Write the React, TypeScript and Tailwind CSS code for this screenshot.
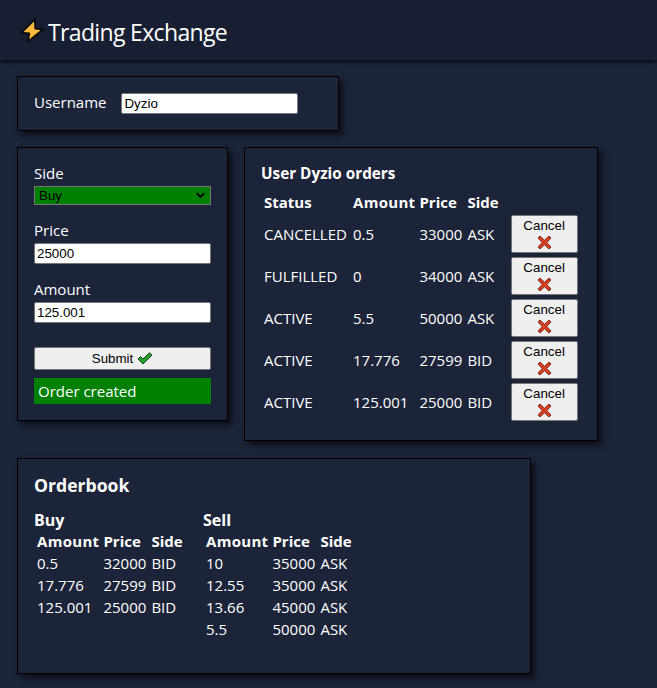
import React from "react";

function Bolt() {
  return (
    <svg width="24" height="25" viewBox="0 0 24 25" className="shrink-0">
      <path d="M14.8 1.2 L1.2 14.8 L9.2 15.6 L7.8 23.8 L23 11.4 L15.4 10.6 Z" fill="#fdbb3c" stroke="#0d0d0d" strokeWidth="2" strokeLinejoin="round" />
    </svg>
  );
}

function Check() {
  return (
    <svg width="16" height="13" viewBox="0 0 16 13" className="inline-block">
      <path d="M1 7 L3.5 4.5 L6 7 L12.5 0.8 L15 3.2 L6 12 Z" fill="#22a32a" stroke="#1f3a1f" strokeWidth="1" strokeLinejoin="round" />
    </svg>
  );
}

function Cross() {
  return (
    <svg width="15" height="15" viewBox="0 0 15 15" className="block mx-auto mt-0.5">
      <path d="M3 1 L7.5 5.2 L12 1 L14 3 L9.8 7.5 L14 12 L12 14 L7.5 9.8 L3 14 L1 12 L5.2 7.5 L1 3 Z" fill="#d8401f" stroke="#7a2a20" strokeWidth="1" strokeLinejoin="round" />
    </svg>
  );
}

const cardClass = "bg-[#1c2439] border border-black shadow-[4px_4px_6px_rgba(0,0,0,0.6)] text-white";
const inputClass = "block w-full h-[21px] bg-white border border-[#767676] text-black text-[13.33px] px-0.5 font-['Liberation_Sans',sans-serif] rounded-[2px] outline-none";

const userOrders = [
  ["CANCELLED", "0.5", "33000", "ASK"],
  ["FULFILLED", "0", "34000", "ASK"],
  ["ACTIVE", "5.5", "50000", "ASK"],
  ["ACTIVE", "17.776", "27599", "BID"],
  ["ACTIVE", "125.001", "25000", "BID"],
];

const buys = [
  ["0.5", "32000", "BID"],
  ["17.776", "27599", "BID"],
  ["125.001", "25000", "BID"],
];

const sells = [
  ["10", "35000", "ASK"],
  ["12.55", "35000", "ASK"],
  ["13.66", "45000", "ASK"],
  ["5.5", "50000", "ASK"],
];

function BookTable({ title, rows }: { title: string; rows: string[][] }) {
  return (
    <div className="w-[169px]">
      <div className="font-bold text-[16px] leading-[18px]">{title}</div>
      <table className="border-separate border-spacing-[2px] text-[15px] leading-[18px] text-left">
        <thead>
          <tr>
            <th className="p-px w-[64px] tracking-[0.3px]">Amount</th>
            <th className="p-px w-[46px]">Price</th>
            <th className="p-px">Side</th>
          </tr>
        </thead>
        <tbody>
          {rows.map((r, i) => (
            <tr key={i}>
              {r.map((c, j) => (
                <td key={j} className="p-px">{c}</td>
              ))}
            </tr>
          ))}
        </tbody>
      </table>
    </div>
  );
}

export default function App() {
  return (
    <div className="w-[657px] h-[688px] overflow-hidden bg-[#1c2439] font-['Open_Sans',sans-serif] text-white">
      {/* Header */}
      <header className="h-[60px] bg-[#191f33] shadow-[0_2px_4px_rgba(0,0,0,0.8)] flex items-center pl-5 gap-1">
        <Bolt />
        <span className="text-[23px] leading-none tracking-[-0.65px] pt-1">Trading Exchange</span>
      </header>

      <main className="pl-[17px] pt-4 flex flex-col">
        {/* Username */}
        <section className={`${cardClass} w-[322px] h-[55px] flex items-center pl-4 gap-[15px]`}>
          <label className="text-[15px] pb-0.5">Username</label>
          <input className={`${inputClass} !w-[177px]`} defaultValue="Dyzio" readOnly />
        </section>

        <div className="flex items-start gap-4 mt-4">
          {/* Order form */}
          <section className={`${cardClass} w-[211px] h-[274px] px-4 pt-[15px]`}>
            <div className="text-[15px] leading-5">Side</div>
            <div className="h-[19px] mt-[3px] bg-[#008000] border border-[#767676] text-black text-[13.33px] font-['Liberation_Sans',sans-serif] flex items-center justify-between pl-1 pr-[5px]">
              <span>Buy</span>
              <svg width="9" height="7" viewBox="0 0 9 7"><path d="M0.8 1.2 L4.5 4.9 L8.2 1.2" fill="none" stroke="#000" strokeWidth="2" /></svg>
            </div>
            <div className="text-[15px] leading-5 mt-[15px] mb-[3px]">Price</div>
            <input className={inputClass} defaultValue="25000" readOnly />
            <div className="text-[15px] leading-5 mt-[15px] mb-[3px]">Amount</div>
            <input className={inputClass} defaultValue="125.001" readOnly />
            <button className="w-full h-[23px] mt-6 bg-[#efefef] border border-[#767676] rounded-[2px] text-black text-[13.33px] font-['Liberation_Sans',sans-serif] flex items-center justify-center gap-1">
              Submit <Check />
            </button>
            <div className="h-[26px] mt-2 bg-[#008000] text-[15px] leading-[26px] pl-1">Order created</div>
          </section>

          {/* User orders */}
          <section className={`${cardClass} w-[354px] h-[294px] pl-4 pt-[15px]`}>
            <div className="font-bold text-[15.3px] leading-5">User Dyzio orders</div>
            <table className="border-separate border-spacing-[2px] text-[15px] leading-4 text-left mt-2">
              <thead>
                <tr>
                  <th className="pt-px pb-0.5 px-px w-[87px]">Status</th>
                  <th className="pt-px pb-0.5 px-px w-[64px] tracking-[0.3px]">Amount</th>
                  <th className="pt-px pb-0.5 px-px w-[46px]">Price</th>
                  <th className="pt-px pb-0.5 px-px">Side</th>
                  <th className="pt-px pb-0.5 px-px" />
                </tr>
              </thead>
              <tbody>
                {userOrders.map((o, i) => (
                  <tr key={i}>
                    {o.map((c, j) => (
                      <td key={j} className="px-px pb-px">{c}</td>
                    ))}
                    <td className="pl-[9px] pr-px py-px">
                      <button className="w-[67px] h-[38px] bg-[#efefef] border border-[#767676] rounded-[2px] text-black text-[13.33px] leading-[15px] font-['Liberation_Sans',sans-serif] block">
                        Cancel
                        <Cross />
                      </button>
                    </td>
                  </tr>
                ))}
              </tbody>
            </table>
          </section>
        </div>

        {/* Orderbook */}
        <section className={`${cardClass} w-[514px] h-[216px] mt-[17px] pl-4 pt-3.5`}>
          <h2 className="font-bold text-[17.6px] leading-6 mb-3.5">Orderbook</h2>
          <div className="flex">
            <BookTable title="Buy" rows={buys} />
            <BookTable title="Sell" rows={sells} />
          </div>
        </section>
      </main>
    </div>
  );
}
